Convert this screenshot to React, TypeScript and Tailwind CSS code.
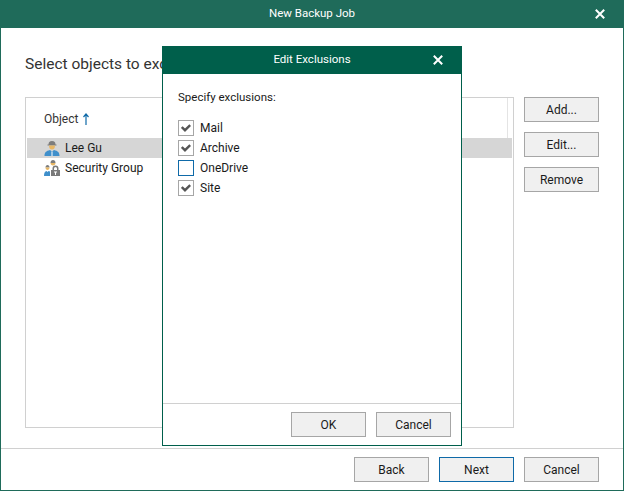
const font = "font-['Roboto','Noto_Sans',sans-serif]"

function ActionButton({ label, primary }: { label: string; primary?: boolean }) {
  return (
    <button
      className={`h-[25px] w-[75px] border bg-[#f0f0f0] text-[12px] leading-[22px] text-[#1a1a1a] ${
        primary ? "border-[#0f6aa8]" : "border-[#a6a6a6]"
      }`}
    >
      {label}
    </button>
  )
}

function UserIcon() {
  return (
    <svg width="16" height="16" viewBox="0 0 16 16" className="shrink-0">
      <path d="M4.500 5C4.500 2 5.500 1 8 1s3.500 1 3.500 4z" fill="#7d7d7d" />
      <path d="M3.500 4.500h9v1h-9z" fill="#7d7d7d" />
      <path d="M5 5.500h6C11 8 10 9.500 8 9.500S5 8 5 5.500z" fill="#e8b765" />
      <path d="M.5 16C.5 12.500 2 11 6 10l2 1.500L10 10c4 1 5.500 2.500 5.500 6z" fill="#3f8fcb" />
      <path d="M7.500 11.500h1V16h-1z" fill="#ffffff" />
    </svg>
  )
}

function GroupIcon() {
  return (
    <svg width="16" height="16" viewBox="0 0 16 16" className="shrink-0">
      <path d="M6.500 3c0-2 1-3 2.500-3s2.500 1 2.500 3z" fill="#7d7d7d" />
      <path d="M6.500 3h5c0 1.500-1 2.500-2.500 2.500S6.500 4.500 6.500 3z" fill="#e8b765" />
      <path d="M1.500 7.500C1.500 6 2.300 5 3.500 5s2 1 2 2.500z" fill="#7d7d7d" />
      <path d="M1.500 7.500h4C5.500 9 4.700 10 3.500 10S1.500 9 1.500 7.500z" fill="#e8b765" />
      <path d="M0 16c0-3 .8-4.500 2.500-5l1 1 1-1 1.500.5V16z" fill="#3f8fcb" />
      <path d="M8.500 10V8.500a3 3 0 0 1 6 0V10h-1.500V8.500a1.500 1.500 0 0 0-3 0V10z" fill="#7a7a7a" />
      <rect x="7" y="10" width="9" height="6" fill="#7a7a7a" />
      <path d="M10 11.500h3v1h-1V15h-1v-2.500h-1z" fill="#ffffff" />
    </svg>
  )
}

function Check({ label, checked }: { label: string; checked: boolean }) {
  return (
    <div className="flex h-5 items-center gap-[6px]">
      <span
        className={`flex h-4 w-4 items-center justify-center border ${
          checked ? "border-[#a6a6a6]" : "border-[#0f6aa8]"
        }`}
      >
        {checked && (
          <svg width="10" height="8" viewBox="0 0 10 8">
            <path d="M.8 3l3.200 3.200L9.200 1.200" fill="none" stroke="#555555" strokeWidth="2.400" />
          </svg>
        )}
      </span>
      <span className="text-[12px] text-[#1a1a1a]">{label}</span>
    </div>
  )
}

function CloseIcon() {
  return (
    <svg width="10" height="10" viewBox="0 0 10 10">
      <path d="M.8.800l8.400 8.400M9.200.800L.8 9.200" stroke="#ffffff" strokeWidth="2" />
    </svg>
  )
}

export default function App() {
  return (
    <div className={`relative flex h-[491px] w-[624px] flex-col overflow-hidden border border-t-0 border-[#1f6b5a] bg-white ${font}`}>
      <div className="relative flex h-7 shrink-0 items-center justify-center bg-[#1f6b5a] text-[11.500px] text-white">
        New Backup Job
        <span className="absolute right-[18px] top-[9px] flex">
          <CloseIcon />
        </span>
      </div>

      <div className="flex min-h-0 flex-1 flex-col px-6">
        <h1 className="mt-[25px] h-[22px] text-[15.500px] leading-[22px] text-[#333333]">Select objects to exclude:</h1>
        <div className="mt-[22px] flex h-[331px] gap-[10px]">
          <div className="w-[489px] border border-[#d0d0d0] px-px">
            <div className="mr-[4px] flex h-10 items-center gap-[5px] border-r border-[#e4e4e4] pl-[17px] pt-[2px] text-[12px] text-[#333333]">
              Object
              <svg width="6" height="12" viewBox="0 0 6 12">
                <path d="M3 1v11M.5 4L3 1l2.500 3" fill="none" stroke="#0f6aa8" strokeWidth="1.200" />
              </svg>
            </div>
            <div className="flex h-5 items-center gap-[5px] bg-[#d6d6d6] pl-[17px] text-[12px] text-[#1a1a1a]">
              <UserIcon />
              Lee Gu
            </div>
            <div className="flex h-5 items-center gap-[5px] pl-[17px] text-[12px] text-[#1a1a1a]">
              <GroupIcon />
              Security Group
            </div>
          </div>
          <div className="flex flex-col gap-[10px]">
            <ActionButton label="Add..." />
            <ActionButton label="Edit..." />
            <ActionButton label="Remove" />
          </div>
        </div>
      </div>

      <div className="flex h-[42px] shrink-0 items-start justify-end gap-[10px] border-t border-[#d0d0d0] pr-6 pt-2">
        <ActionButton label="Back" />
        <ActionButton label="Next" primary />
        <ActionButton label="Cancel" />
      </div>

      <div className="absolute left-[161px] top-[46px] flex h-[400px] w-[300px] flex-col border border-t-0 border-[#005f4b] bg-white">
        <div className="relative flex h-7 shrink-0 items-center justify-center bg-[#005f4b] text-[11.500px] text-white">
          Edit Exclusions
          <span className="absolute right-[18px] top-[9px] flex">
            <CloseIcon />
          </span>
        </div>
        <div className="flex-1 px-[15px] pt-[14px]">
          <p className="text-[11.500px] leading-[18px] text-[#1a1a1a]">Specify exclusions:</p>
          <div className="mt-[12px] flex flex-col">
            <Check label="Mail" checked />
            <Check label="Archive" checked />
            <Check label="OneDrive" checked={false} />
            <Check label="Site" checked />
          </div>
        </div>
        <div className="flex h-[42px] shrink-0 items-start justify-end gap-[10px] border-t border-[#d0d0d0] pr-[10px] pt-2">
          <ActionButton label="OK" />
          <ActionButton label="Cancel" />
        </div>
      </div>
    </div>
  )
}
